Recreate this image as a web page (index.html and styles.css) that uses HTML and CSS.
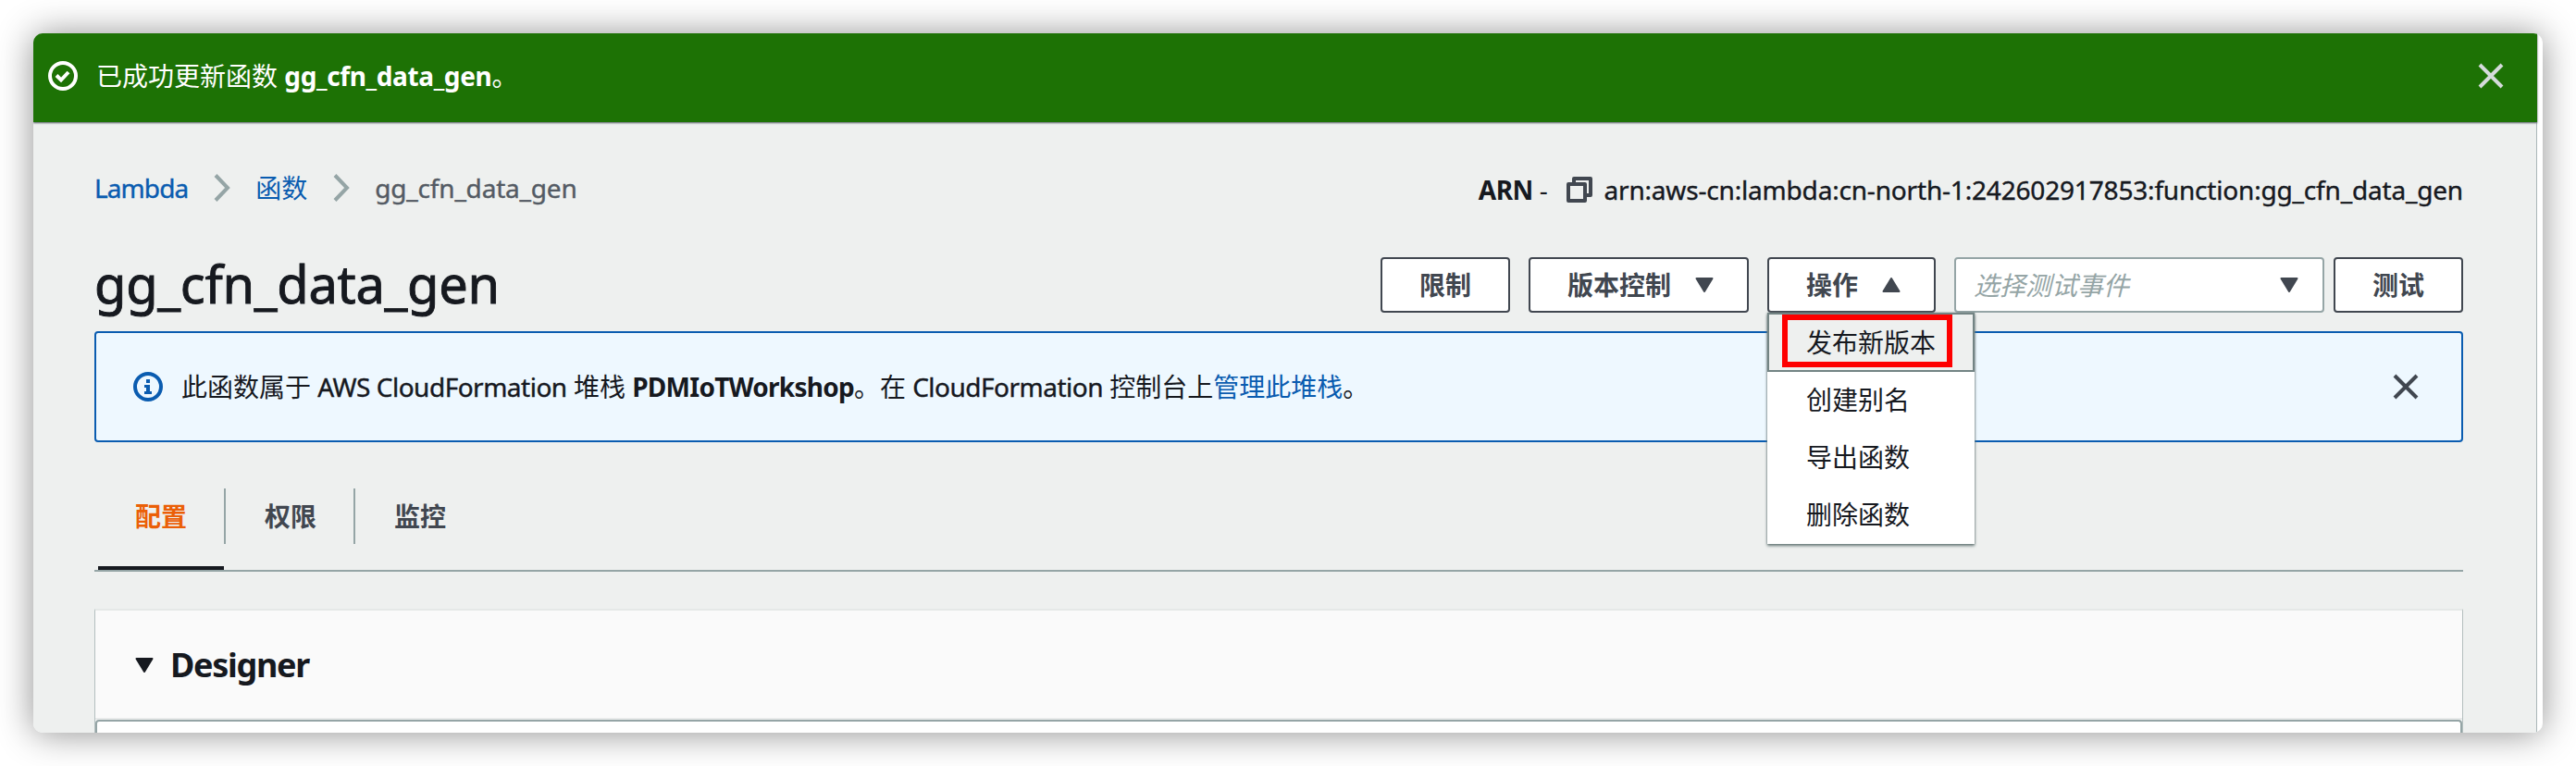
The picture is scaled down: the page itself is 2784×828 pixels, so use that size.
FILE: index.html
```html
<!DOCTYPE html>
<html lang="zh-CN">
<head>
<meta charset="utf-8">
<title>gg_cfn_data_gen</title>
<link rel="stylesheet" href="styles.css">
</head>
<body>
<div class="window">
  <div class="page">
    <div class="flash">
      <svg class="icon-32" viewBox="0 0 32 32"><circle cx="16" cy="16" r="14" fill="none" stroke="#fff" stroke-width="4"/><path d="M9 15.500l5 5 8-8.500" fill="none" stroke="#fff" stroke-width="4"/></svg>
      <p class="flash-text">已成功更新函数 <b class="latin-bold">gg_cfn_data_gen</b>。</p>
      <svg class="flash-close" viewBox="0 0 28 28"><path d="M2 2l24 24M26 2L2 26" stroke="#d5dbdb" stroke-width="4"/></svg>
    </div>
    <main class="content">
      <div class="top-row">
        <nav class="crumbs">
          <a class="crumb-root">Lambda</a>
          <svg class="chevron" viewBox="0 0 18 30"><path d="M2 1.500l13 13.500-13 13.500" fill="none" stroke="#95a5a6" stroke-width="4"/></svg>
          <a>函数</a>
          <svg class="chevron" viewBox="0 0 18 30"><path d="M2 1.500l13 13.500-13 13.500" fill="none" stroke="#95a5a6" stroke-width="4"/></svg>
          <span class="crumb-current">gg_cfn_data_gen</span>
        </nav>
        <div class="arn">
          <span class="arn-label"><b>ARN</b> -</span>
          <svg class="copy" viewBox="0 0 28 28" fill="none" stroke="#414750" stroke-width="4" stroke-linejoin="round"><path d="M8 6V2h18v18h-4"/><path d="M2 8h18v18H2z"/></svg>
          <span class="arn-value">arn:aws-cn:lambda:cn-north-1:242602917853:function:gg_cfn_data_gen</span>
        </div>
      </div>
      <div class="title-row">
        <h1>gg_cfn_data_gen</h1>
        <div class="actions">
          <button class="btn">限制</button>
          <button class="btn btn-menu">版本控制<svg class="caret" viewBox="0 0 20 16"><path d="M1.500 1h17L10 15z"/></svg></button>
          <div class="dropdown">
            <button class="btn btn-menu">操作<svg class="caret" viewBox="0 0 20 16"><path d="M1.500 15h17L10 1z"/></svg></button>
            <ul class="menu">
              <li class="active"><span class="mark"></span>发布新版本</li>
              <li>创建别名</li>
              <li>导出函数</li>
              <li>删除函数</li>
            </ul>
          </div>
          <div class="select"><em>选择测试事件</em><svg class="caret" viewBox="0 0 20 16"><path d="M1.500 1h17L10 15z"/></svg></div>
          <button class="btn btn-test">测试</button>
        </div>
      </div>
      <div class="alert">
        <svg class="icon-32" viewBox="0 0 32 32"><circle cx="16" cy="16" r="14" fill="none" stroke="#0a5cb0" stroke-width="4"/><path d="M14 8h4v4h-4zM12 14h6v7h2v3h-8v-3h2v-4h-2z" fill="#0a5cb0"/></svg>
        <p class="alert-text">此函数属于 <span class="latin">AWS CloudFormation</span> 堆栈 <b class="stack-name">PDMIoTWorkshop</b>。在 <span class="latin">CloudFormation</span> 控制台上<a>管理此堆栈</a>。</p>
        <svg class="alert-close" viewBox="0 0 28 28"><path d="M2 2l24 24M26 2L2 26" stroke="#414750" stroke-width="4"/></svg>
      </div>
      <div class="tabs">
        <div class="tab selected"><span>配置</span></div>
        <div class="tab"><span>权限</span></div>
        <div class="tab"><span>监控</span></div>
      </div>
      <section class="panel">
        <h2><svg class="caret" viewBox="0 0 20 16"><path d="M1.500 1h17L10 15z"/></svg>Designer</h2>
        <div class="canvas"></div>
      </section>
    </main>
  </div>
</div>
</body>
</html>
```
FILE: styles.css
```css
* { box-sizing: border-box; }
body {
  margin: 0;
  height: 828px;
  padding: 36px;
  overflow: hidden;
  background: #fff;
  color: #16191f;
  font: 28px/40px "Noto Sans", "Noto Sans CJK SC", sans-serif;
}
p, h1, h2, ul { margin: 0; padding: 0; }
svg { display: block; flex: none; }
a { color: #0a5cb0; }
.latin { letter-spacing: -.5px; -webkit-text-stroke: .4px; }
.latin-bold { letter-spacing: -.35px; }
.stack-name { letter-spacing: -.75px; }
.window {
  height: 756px;
  padding-right: 6px;
  border-radius: 10px;
  overflow: hidden;
  background: #fff;
  box-shadow: 0 1px 38px rgba(0, 0, 0, .44);
}
.page { height: 100%; background: #eef0ef; border-right: 1px solid #aab7b8; }
.flash {
  display: flex;
  align-items: center;
  height: 96px;
  margin-right: -1px;
  padding: 0 36px 4px 16px;
  background: #1d7205;
  color: #fff;
  box-shadow: 0 1px 2px #545b64;
}
.icon-32 { width: 32px; height: 32px; }
.flash-text { flex: 1; margin-left: 20px; white-space: nowrap; }
.flash-close { width: 28px; height: 28px; }
.content { padding: 0 79px 0 66px; }
.top-row { display: flex; justify-content: space-between; height: 146px; padding-top: 51px; }
.crumbs { display: flex; align-items: center; height: 40px; gap: 27.5px; color: #545b64; white-space: nowrap; }
.crumb-root { letter-spacing: -.9px; -webkit-text-stroke: .4px; }
.crumb-current { letter-spacing: -.2px; -webkit-text-stroke: .4px; }
.chevron { width: 18px; height: 30px; }
.arn { display: flex; align-items: center; height: 40px; margin-top: 2px; white-space: nowrap; }
.arn-label { letter-spacing: -.4px; }
.arn-value { letter-spacing: -.18px; -webkit-text-stroke: .4px; }
.copy { width: 28px; height: 28px; margin: 0 12px 0 21px; }
.title-row { display: flex; justify-content: space-between; height: 60px; }
h1 { margin-top: -2px; font-size: 56px; line-height: 60px; font-weight: 400; letter-spacing: -.3px; -webkit-text-stroke: .9px; }
.actions { display: flex; gap: 20px; }
.btn {
  display: flex;
  align-items: center;
  height: 60px;
  padding: 0 40px;
  border: 2px solid #414750;
  border-radius: 4px;
  background: #fff;
  color: #414750;
  font: bold 28px/40px "Noto Sans", "Noto Sans CJK SC", sans-serif;
}
.btn-menu { gap: 26px; padding-right: 36px; }
.btn-test { margin-left: -10px; }
.caret { width: 20px; height: 16px; fill: currentColor; stroke: currentColor; stroke-width: 2; stroke-linejoin: round; }
.dropdown { position: relative; }
.menu {
  position: absolute;
  z-index: 2;
  top: 60px;
  left: 0;
  width: 224px;
  height: 250px;
  background: #fff;
  list-style: none;
  box-shadow: 0 2px 3px #687878, 0 0 2px #829090;
}
.menu li { height: 62px; padding: 11px 42px; white-space: nowrap; }
.menu .active { position: relative; height: 64px; padding: 10px 40px 10px; border: 2px solid #738484; background: #eef0ef; }
.menu .active + li { margin-top: -1px; }
.mark { position: absolute; left: 14px; top: 0; width: 184px; height: 57px; border: 6px solid #fe0000; }
.select {
  display: flex;
  align-items: center;
  justify-content: space-between;
  width: 400px;
  height: 60px;
  padding: 0 26px 0 19px;
  border: 2px solid #95a5a6;
  border-radius: 4px;
  background: #fff;
  color: #414750;
}
.select em { color: #95a5a6; }
.alert {
  display: flex;
  align-items: center;
  height: 120px;
  margin-top: 20px;
  padding: 0 46px 0 40px;
  border: 2px solid #0a5cb0;
  border-radius: 4px;
  background: #eef8ff;
}
.alert-text { flex: 1; margin-left: 20px; white-space: nowrap; }
.alert-close { width: 28px; height: 28px; }
.tabs { display: flex; height: 140px; padding: 50px 0 0 4px; border-bottom: 2px solid #95a5a6; color: #414750; font-weight: 700; }
.tab { height: 88px; }
.tab span { display: block; height: 60px; padding: 10px 40px; border-right: 2px solid #95a5a6; line-height: 40px; }
.tab:last-child span { border: 0; }
.tab + .tab { padding-left: 2px; }
.selected { background: linear-gradient(#16191f, #16191f) 0 100% / 136px 4px no-repeat; color: #eb5f07; }
.panel {
  height: 134px;
  margin-top: 40px;
  border: 1px solid #b4bfbf;
  border-top: 2px solid #e5e8e7;
  border-bottom: 0;
  background: #fafafa;
}
h2 { display: flex; align-items: center; gap: 18px; height: 118px; padding: 2px 0 0 43px; border-bottom: 2px solid #e8eaea; font-size: 36px; line-height: 50px; letter-spacing: -1.3px; }
.canvas { height: 14px; border: 2px solid #95a5a6; border-bottom: 0; border-radius: 4px 4px 0 0; background: #fff; }
```
